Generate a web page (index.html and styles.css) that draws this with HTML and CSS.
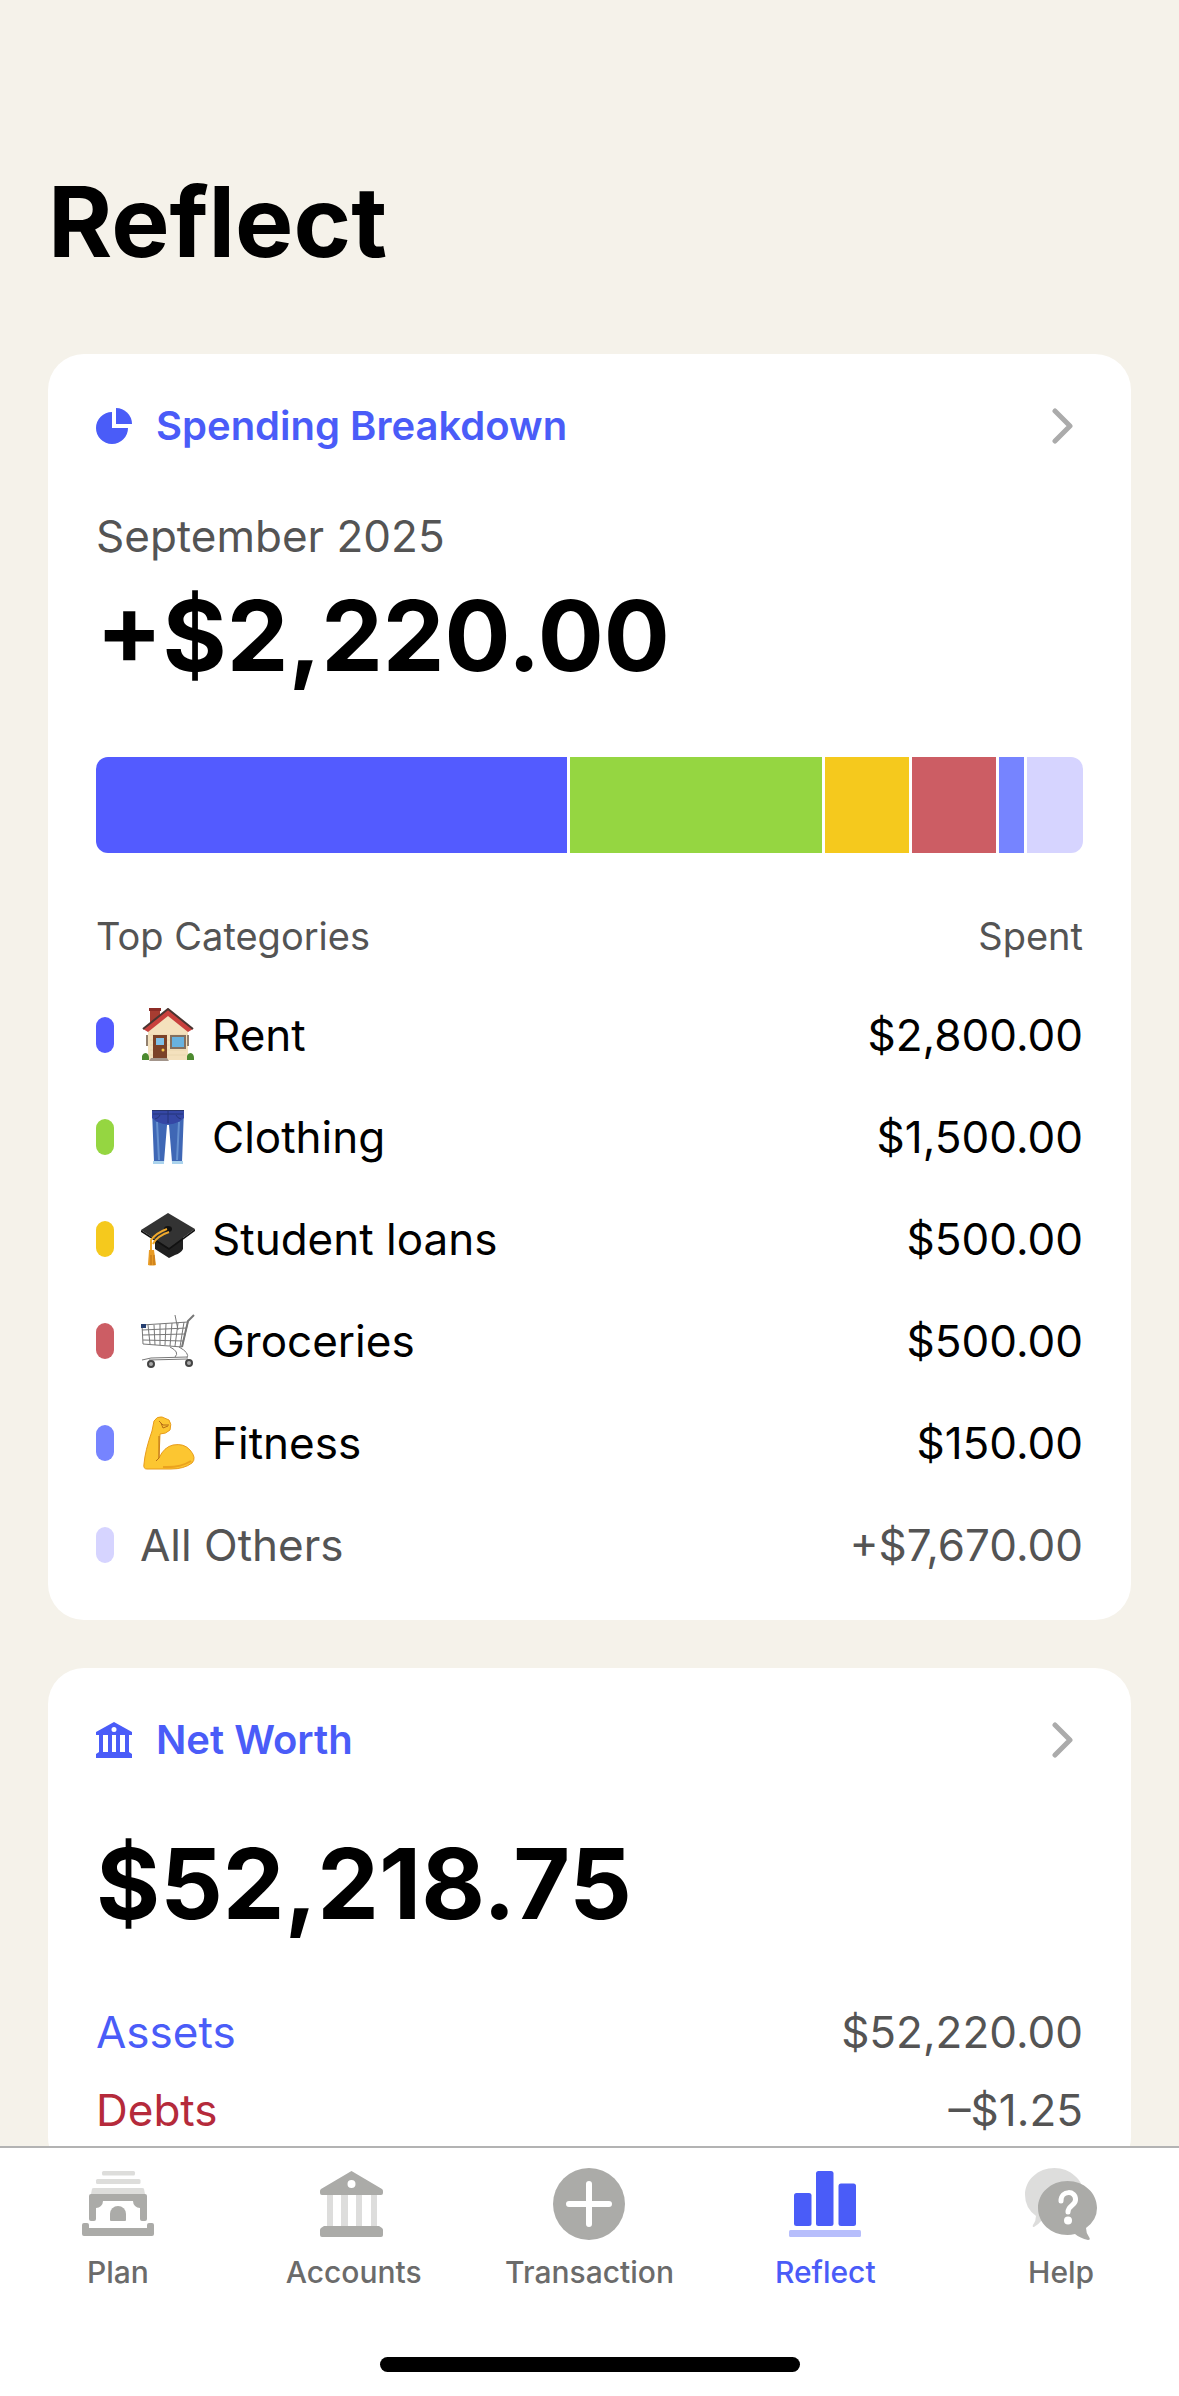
FILE: index.html
```html
<!DOCTYPE html>
<html lang="en">
<head>
  <meta charset="UTF-8" />
  <meta name="viewport" content="width=device-width, initial-scale=1" />
  <title>Reflect</title>
  <link rel="stylesheet" href="styles.css">
</head>
<body>
  <main class="content">
    <h1>Reflect</h1>

    <section class="card">
      <a class="card-header" href="#spending">
        <svg class="card-icon" viewBox="0 0 36 36" fill="currentColor" aria-hidden="true">
          <path d="M16 4A16 16 0 1 0 32 20H16Z" />
          <path d="M20 0A16 16 0 0 1 36 16H20Z" />
        </svg>
        <h2>Spending Breakdown</h2>
        <svg class="chevron" viewBox="0 0 24 36" aria-hidden="true"><path d="M4 3 19 18 4 33" /></svg>
      </a>
      <p class="period">September 2025</p>
      <p class="amount">+$2,220.00</p>

      <div class="bar">
        <span class="blue" style="flex-grow: 2800"></span>
        <span class="green" style="flex-grow: 1500"></span>
        <span class="yellow" style="flex-grow: 500"></span>
        <span class="red" style="flex-grow: 500"></span>
        <span class="periwinkle" style="flex-grow: 150"></span>
        <span class="lavender" style="flex-grow: 330"></span>
      </div>

      <table class="categories">
        <thead>
          <tr><th scope="col">Top Categories</th><th scope="col">Spent</th></tr>
        </thead>
        <tbody>
          <tr>
            <td>
              <div class="category">
                <span class="pill blue"></span>
                <svg class="emoji" viewBox="0 0 54 54" aria-hidden="true">
                  <path d="M9 1h10v16H9z" fill="#a73c31" />
                  <path d="M8 0h12v3H8z" fill="#8d2c26" />
                  <path d="M7 21 27 4 47 21V52H7z" fill="#f4e1bd" />
                  <path d="M9 27h36M9 32h36M9 37h36M9 42h36M9 47h36" stroke="#ead7b0" />
                  <path d="M2 21 27 1 52 21 47 24 27 8 7 24z" fill="#c9413d" />
                  <path d="M2 21 27 1 52 21" fill="none" stroke="#4a3430" stroke-width="2" />
                  <path d="M12 27h14v25H12z" fill="#7b4228" />
                  <path d="M15 30h8v7h-8z" fill="#7fc0e8" />
                  <circle cx="22" cy="42" r="1.5" fill="#f5c84b" />
                  <path d="M29 27h16v14H29z" fill="#84705f" />
                  <path d="M31 29h12v10H31z" fill="#68b2df" />
                  <path d="M5 27h2v11H5zM46 27h2v11h-2z" fill="#92806e" />
                  <path d="M10 50h16l2 3H8z" fill="#a3958b" />
                  <path d="M1 52V48Q2 45 5 45Q8 46 8 50V52zM46 52V48Q47 45 50 45Q53 46 53 50V52z" fill="#4c8a2f" />
                </svg>
                <span>Rent</span>
              </div>
            </td>
            <td>$2,800.00</td>
          </tr>
          <tr>
            <td>
              <div class="category">
                <span class="pill green"></span>
                <svg class="emoji" viewBox="0 0 54 54" aria-hidden="true">
                  <path d="M11 0H43L41 52H31L28 15H26L23 52H13z" fill="#3f67b5" />
                  <path d="M11 0H43V8Q35 15 27 14Q19 15 11 8z" fill="#3547a5" />
                  <path d="M16 12 18 50M38 12 36 50" stroke="#6590cf" stroke-width="2" />
                  <path d="M12 4H42M27 1V13M14 9Q18 8 19 5M40 9Q36 8 35 5" fill="none" stroke="#253578" />
                  <path d="M11 0H43" stroke="#28356d" stroke-width="2" />
                  <path d="M12 51H23v3H12zM31 51H42v3H31z" fill="#abd3ed" />
                </svg>
                <span>Clothing</span>
              </div>
            </td>
            <td>$1,500.00</td>
          </tr>
          <tr>
            <td>
              <div class="category">
                <span class="pill yellow"></span>
                <svg class="emoji" viewBox="0 0 54 54" aria-hidden="true">
                  <path d="M14 25H42V37Q40 41 34 43L28 46L14 37z" fill="#202020" />
                  <path d="M0 18 27 1 54 17 28 36z" fill="#333" />
                  <path d="M0 18 28 36 54 17V19L28 38 0 20z" fill="#111" />
                  <ellipse cx="27" cy="17" rx="4" ry="3" fill="#111" />
                  <path d="M26 17Q15 21 10 28V43M28 20Q16 24 12 32" fill="none" stroke="#f0a92c" stroke-width="2" />
                  <path d="M8 38h5l2 15q-4 1-8 0z" fill="#e79a24" />
                  <path d="M10 43v10M13 43v10" stroke="#ba6f17" />
                </svg>
                <span>Student loans</span>
              </div>
            </td>
            <td>$500.00</td>
          </tr>
          <tr>
            <td>
              <div class="category">
                <span class="pill red"></span>
                <svg class="emoji" viewBox="0 0 54 54" aria-hidden="true">
                  <g fill="none" stroke="#777">
                    <path d="M1 11 47 8 41 33 2 30zM1 16 46 14M2 21 44 20M2 26 43 27M7 11 9 30M13 11 14 31M19 10v21M25 10 24 31M31 9 29 32M37 9 34 32M43 8 39 33" />
                    <path d="M41 33 47 7 53 1" stroke-width="2" />
                    <path d="M34 1 37 16M29 33Q39 38 34 43M38 33Q49 39 46 44M1 46 10 44 46 43M8 46 47 45" />
                  </g>
                  <path d="M0 10h5v4H0z" fill="#253e70" />
                  <circle cx="10" cy="50" r="3" fill="#aaa" stroke="#444" stroke-width="2" />
                  <circle cx="48" cy="49" r="3" fill="#aaa" stroke="#444" stroke-width="2" />
                </svg>
                <span>Groceries</span>
              </div>
            </td>
            <td>$500.00</td>
          </tr>
          <tr>
            <td>
              <div class="category">
                <span class="pill periwinkle"></span>
                <svg class="emoji" viewBox="0 0 54 54" aria-hidden="true">
                  <path d="M11 15 13 5Q16 0 21 1L28 4Q31 8 29 14Q25 18 19 18L18 42Q23 31 32 29Q43 27 49 34Q56 42 51 47Q43 53 30 53L6 53Q2 53 3 48Q4 35 11 15Z" fill="#fcc631" stroke="#e89c1c" />
                  <path d="M18 5 22 9H28M20 7 22 12 27 10M18 20V42L15 45" fill="none" stroke="#b66c16" />
                  <path d="M22 51Q39 52 50 45" fill="none" stroke="#eba31e" stroke-width="2" />
                </svg>
                <span>Fitness</span>
              </div>
            </td>
            <td>$150.00</td>
          </tr>
          <tr class="others">
            <td>
              <div class="category">
                <span class="pill lavender"></span>
                <span>All Others</span>
              </div>
            </td>
            <td>+$7,670.00</td>
          </tr>
        </tbody>
      </table>
    </section>

    <section class="card">
      <a class="card-header" href="#net-worth">
        <svg class="card-icon" viewBox="0 0 36 36" fill="currentColor" aria-hidden="true">
          <path fill-rule="evenodd" d="M18 0 36 10V13H33V30L36 32V36H0V32L3 30V13H0V10ZM18 5a2 2 0 1 0 0 5a2 2 0 1 0 0-5ZM7 13V30H12V13ZM16 13V30H20V13ZM24 13V30H29V13Z" />
        </svg>
        <h2>Net Worth</h2>
        <svg class="chevron" viewBox="0 0 24 36" aria-hidden="true"><path d="M4 3 19 18 4 33" /></svg>
      </a>
      <p class="amount worth">$52,218.75</p>
      <dl class="totals">
        <div><dt class="assets">Assets</dt><dd>$52,220.00</dd></div>
        <div><dt class="debts">Debts</dt><dd>–$1.25</dd></div>
      </dl>
    </section>
  </main>

  <footer class="tab-bar">
    <nav class="tabs">
      <a href="#plan">
        <svg viewBox="0 0 72 72" fill="currentColor" aria-hidden="true">
          <g class="soft">
            <rect x="20" y="3" width="33" height="4.5" rx="1.5" />
            <rect x="14" y="11" width="44.5" height="5" rx="1.5" />
            <path d="M9 26 10 21Q10 20 12 20H60Q62 20 62 21L63 26Z" />
          </g>
          <path d="M9 26H63Q65 26 65 28V51Q65 53 63 53H60Q58 53 58 51V40A7 7 0 0 1 51 33H21A7 7 0 0 1 14 40V51Q14 53 12 53H9Q7 53 7 51V28Q7 26 9 26Z" />
          <path d="M28 52V46a8 8 0 0 1 16 0V52Q44 53 43 53H29Q28 53 28 52Z" />
          <path d="M2 55H5Q7 55 7 57V60H65V57Q65 55 67 55H70Q72 55 72 57V66Q72 68 70 68H2Q0 68 0 66V57Q0 55 2 55Z" />
        </svg>
        Plan
      </a>
      <a href="#accounts">
        <svg viewBox="0 0 72 72" fill="currentColor" aria-hidden="true">
          <path class="soft" d="M9 27h6v31H9zM23 27h7v31h-7zM38 27h6v31h-6zM53 27h6v31h-6z" />
          <path fill-rule="evenodd" d="M33.5 3 64 21Q65 22 65 23V25Q65 27 63 27H4Q2 27 2 25V23Q2 22 3 21ZM33.5 12a4 4 0 1 0 0 8a4 4 0 1 0 0-8Z" />
          <path d="M6 58H61L64 60Q65 61 65 62V67Q65 69 63 69H4Q2 69 2 67V62Q2 61 3 60Z" />
        </svg>
        Accounts
      </a>
      <a href="#transaction">
        <svg viewBox="0 0 72 72" fill="currentColor" aria-hidden="true">
          <circle cx="36" cy="36" r="36" />
          <path d="M36 16V56M16 36H56" stroke="#fff" stroke-width="6" stroke-linecap="round" />
        </svg>
        Transaction
      </a>
      <a class="active" href="#reflect" aria-current="page">
        <svg viewBox="0 0 72 72" fill="currentColor" aria-hidden="true">
          <rect x="5" y="25" width="17.5" height="33" rx="2.5" />
          <rect x="27" y="3" width="17.5" height="55" rx="2.5" />
          <rect x="49.5" y="15.5" width="17.5" height="42.5" rx="2.5" />
          <rect class="soft" y="62" width="72" height="7" rx="1.5" />
        </svg>
        Reflect
      </a>
      <a href="#help">
        <svg viewBox="0 0 72 72" fill="currentColor" aria-hidden="true">
          <path class="soft" d="M29.5 0C45 0 59 12 59 27S45 54 29.5 54Q23 54 17 52Q13 57 9 59Q7 59 8 57Q11 53 11 48Q0 40 0 27C0 12 13 0 29.5 0Z" />
          <path d="M42.5 13C59 13 72 25 72 40Q72 52 61 60Q61 65 64 69Q66 72 63 72Q55 70 50 66Q46 67 42.5 67C26 67 13 55 13 40S26 13 42.5 13Z" />
          <path d="M36 33C36 22 51 22 50.5 32C50 38 43 37 43 44" fill="none" stroke="#fff" stroke-width="5" stroke-linecap="round" />
          <circle cx="43" cy="52.5" r="4" fill="#fff" />
        </svg>
        Help
      </a>
    </nav>
    <div class="home-indicator"></div>
  </footer>
</body>
</html>
```

FILE: styles.css
```css
* {
  box-sizing: border-box;
}
body {
  margin: 0;
  height: 100vh;
  display: flex;
  flex-direction: column;
  font-family: Inter, Roboto, sans-serif;
  font-size: 44px;
  line-height: 56px;
  color: #000;
  background: #f5f2ea;
}
h1, h2, p, dl, dd {
  margin: 0;
}
a {
  text-decoration: none;
}
.content {
  flex: 1;
  min-height: 0;
  overflow-y: auto;
  scrollbar-width: none;
  padding: 162px 48px 0;
}
h1 {
  font-size: 98px;
  line-height: 120px;
  font-weight: 700;
  margin-bottom: 72px;
}

/* cards */
.card {
  background: #fff;
  border-radius: 36px;
  padding: 48px 48px 24px;
  margin-bottom: 48px;
}
.card-header {
  display: flex;
  align-items: center;
  gap: 24px;
  height: 48px;
  color: #4a5cf8;
}
.card-header h2 {
  flex: 1;
  font-size: 40px;
  line-height: 48px;
  font-weight: 600;
}
.card-icon {
  width: 36px;
  height: 36px;
}
.chevron {
  width: 24px;
  height: 36px;
  margin-right: 8px;
  fill: none;
  stroke: #ababab;
  stroke-width: 5;
  stroke-linecap: round;
  stroke-linejoin: round;
}
.period {
  margin-top: 58px;
  color: #545454;
}
.amount {
  margin-top: 12px;
  font-size: 98px;
  line-height: 120px;
  font-weight: 700;
}
.amount.worth {
  margin-top: 60px;
}

/* spending bar */
.bar {
  display: flex;
  gap: 3px;
  height: 96px;
  margin-top: 61px;
  border-radius: 12px;
  overflow: hidden;
}
.bar span {
  flex-basis: 0;
}
.blue { background: #535bff; }
.green { background: #95d641; }
.yellow { background: #f5c91d; }
.red { background: #cc5d64; }
.periwinkle { background: #7684ff; }
.lavender { background: #d6d4ff; }

/* categories */
.categories {
  width: 100%;
  margin-top: 35px;
  border-collapse: collapse;
}
.categories th,
.categories td {
  padding: 0;
  text-align: left;
}
.categories th {
  height: 96px;
  font-size: 38px;
  font-weight: 400;
  color: #545454;
}
.categories td {
  height: 102px;
}
.categories th:last-child,
.categories td:last-child {
  text-align: right;
}
.category {
  display: flex;
  align-items: center;
}
.pill {
  width: 18px;
  height: 36px;
  margin-right: 26px;
  border-radius: 9px;
}
.emoji {
  width: 56px;
  height: 54px;
  margin-right: 16px;
}
.others {
  color: #545454;
}

/* net worth */
.totals {
  margin-top: 49px;
}
.totals div {
  display: flex;
  justify-content: space-between;
  align-items: center;
  height: 78px;
}
.totals dd {
  color: #545454;
}
.totals .assets {
  color: #4a5cf8;
}
.totals .debts {
  color: #b52a3b;
}

/* tab bar */
.tab-bar {
  background: #fff;
  border-top: 2px solid #b3b3b3;
  padding: 20px 0 24px;
}
.tabs {
  display: flex;
}
.tabs a {
  flex: 1 0 0;
  display: flex;
  flex-direction: column;
  align-items: center;
  gap: 12px;
  font-size: 30px;
  line-height: 40px;
  font-weight: 500;
  color: #6b6b6b;
}
.tabs svg {
  width: 72px;
  height: 72px;
  color: #ababa8;
}
.tabs .soft {
  opacity: 0.4;
}
.tabs .active,
.tabs .active svg {
  color: #4a5cf8;
}
.home-indicator {
  width: 420px;
  height: 15px;
  margin: 65px auto 0;
  border-radius: 8px;
  background: #000;
}
```
